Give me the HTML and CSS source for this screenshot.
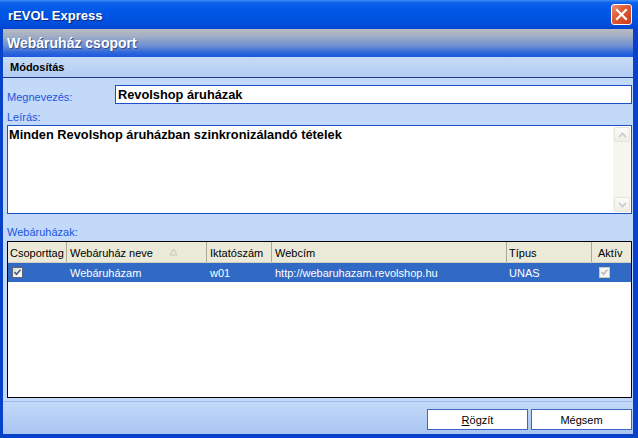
FILE: index.html
```html
<!DOCTYPE html>
<html lang="hu">
<head>
<meta charset="utf-8">
<title>rEVOL Express</title>
<link rel="stylesheet" href="styles.css">
</head>
<body>
<div class="window">
  <div class="titlebar">
    <span class="title">rEVOL Express</span>
    <span class="close">
      <svg width="13" height="13" viewBox="0 0 13 13"><path d="M2 2 L11 11 M11 2 L2 11" stroke="#fff" stroke-width="2.2" stroke-linecap="square"/></svg>
    </span>
  </div>
  <div class="frame">
    <div class="header">Webáruház csoport</div>
    <div class="subbar">Módosítás</div>
    <div class="content">
      <div class="field-row">
        <label class="label name-label">Megnevezés:</label>
        <div class="input">Revolshop áruházak</div>
      </div>
      <div class="label block-label">Leírás:</div>
      <div class="textarea">
        <div class="ta-text">Minden Revolshop áruházban szinkronizálandó tételek</div>
        <div class="vscroll">
          <span class="sbtn"><svg width="9" height="6" viewBox="0 0 9 6"><path d="M1 5 L4.5 1.5 L8 5" fill="none" stroke="#c3c9d8" stroke-width="1.6"/></svg></span>
          <span class="sbtn"><svg width="9" height="6" viewBox="0 0 9 6"><path d="M1 1 L4.5 4.5 L8 1" fill="none" stroke="#c3c9d8" stroke-width="1.6"/></svg></span>
        </div>
      </div>
      <div class="label block-label list-label">Webáruházak:</div>
      <div class="grid">
        <div class="grow ghead">
          <div class="c c1">Csoporttag</div>
          <div class="c c2">Webáruház neve<svg class="sort" width="9" height="8" viewBox="0 0 9 8"><path d="M4.5 1 L8 7 L1 7 Z" fill="none" stroke="#c8c5b6" stroke-width="1"/></svg></div>
          <div class="c c3">Iktatószám</div>
          <div class="c c4">Webcím</div>
          <div class="c c5">Típus</div>
          <div class="c c6">Aktív</div>
        </div>
        <div class="grow gsel">
          <div class="c c1"><span class="chk"><svg width="9" height="9" viewBox="0 0 9 9"><path d="M1.5 4 L3.5 6.3 L7.5 1.8" fill="none" stroke="#4a5a7a" stroke-width="1.5"/></svg></span></div>
          <div class="c c2">Webáruházam</div>
          <div class="c c3">w01</div>
          <div class="c c4">http://webaruhazam.revolshop.hu</div>
          <div class="c c5">UNAS</div>
          <div class="c c6"><span class="chk dis"><svg width="9" height="9" viewBox="0 0 9 9"><path d="M1.5 4 L3.5 6.3 L7.5 1.8" fill="none" stroke="#b8b8b8" stroke-width="1.5"/></svg></span></div>
        </div>
      </div>
    </div>
    <div class="footer">
      <button class="btn"><u>R</u>ögzít</button>
      <button class="btn">Mégsem</button>
    </div>
  </div>
</div>
</body>
</html>
```
FILE: styles.css
```css
html, body {
  margin: 0;
  padding: 0;
  background: #ffffff;
}
.window {
  width: 638px;
  height: 438px;
  display: flex;
  flex-direction: column;
  background: #0842c8;
  font-family: "Liberation Sans", Arial, sans-serif;
  font-size: 11px;
  color: #000;
  overflow: hidden;
}
.titlebar {
  height: 29px;
  flex: none;
  display: flex;
  align-items: center;
  justify-content: space-between;
  padding: 2px 6px 0 8px;
  box-sizing: border-box;
  background: linear-gradient(to bottom, #3d8df5 0px, #0a5ee9 3px, #0057e6 12px, #0050dd 22px, #0046d2 29px);
}
.title {
  font-weight: bold;
  font-size: 13px;
  color: #fff;
  text-shadow: 1px 1px 0 #0a2a80;
}
.close {
  width: 21px;
  height: 21px;
  box-sizing: border-box;
  border: 1px solid #ffffff;
  border-radius: 3px;
  background: linear-gradient(135deg, #f09070 0%, #e05a36 40%, #c83c1a 100%);
  display: flex;
  align-items: center;
  justify-content: center;
  margin-top: -2px;
}
.frame {
  flex: 1;
  margin: 0 5px 4px 3px;
  display: flex;
  flex-direction: column;
  background: #c3d9f9;
}
.header {
  height: 28px;
  flex: none;
  display: flex;
  align-items: center;
  padding-left: 4px;
  font-weight: bold;
  font-size: 14px;
  color: #fff;
  text-shadow: 1px 1px 0 #3a4e80;
  background: linear-gradient(to bottom, #b7bac3 0%, #a2aec4 25%, #6f8fd2 60%, #2d66dc 85%, #1a58dc 100%);
}
.subbar {
  height: 20px;
  flex: none;
  display: flex;
  align-items: center;
  padding-left: 7px;
  font-weight: bold;
  font-size: 11px;
  border-bottom: 1px solid #1c3a8a;
  background: linear-gradient(to bottom, #c6dbf8 0%, #b2ccf3 100%);
}
.content {
  flex: 1;
  padding: 7px 1px 0 4px;
  display: flex;
  flex-direction: column;
}
.field-row {
  display: flex;
  height: 19px;
}
.label {
  color: #1b55dc;
  font-size: 11px;
}
.name-label {
  width: 108px;
  padding-top: 5px;
  line-height: 14px;
}
.input {
  flex: 1;
  box-sizing: border-box;
  height: 19px;
  border: 1px solid #1c50c8;
  background: #fff;
  font-weight: bold;
  font-size: 12.8px;
  line-height: 17px;
  padding-left: 2px;
}
.block-label {
  margin-top: 6px;
  height: 15px;
  line-height: 15px;
}
.list-label {
  margin-top: 11px;
}
.textarea {
  height: 89px;
  box-sizing: border-box;
  border: 1px solid #1c50c8;
  background: #fff;
  display: flex;
}
.ta-text {
  flex: 1;
  font-weight: bold;
  font-size: 12.8px;
  line-height: 15px;
  padding: 1px 1px;
}
.vscroll {
  width: 17px;
  margin: 1px 1px 1px 0;
  background: #f6f5ee;
  display: flex;
  flex-direction: column;
  justify-content: space-between;
}
.sbtn {
  width: 16px;
  height: 15px;
  box-sizing: border-box;
  border: 1px solid #e8e6dc;
  border-radius: 2px;
  background: linear-gradient(to bottom, #fbfbf8, #efeee6);
  display: flex;
  align-items: center;
  justify-content: center;
  margin-left: 1px;
}
.grid {
  margin-top: 1px;
  height: 157px;
  box-sizing: border-box;
  border: 1px solid #000;
  background: #fff;
}
.grow {
  display: flex;
}
.c {
  box-sizing: border-box;
  white-space: nowrap;
  overflow: hidden;
  display: flex;
  align-items: center;
}
.c1 { width: 59px; padding-left: 2px; }
.c2 { width: 140px; padding-left: 3px; }
.c3 { width: 65px; padding-left: 3px; }
.c4 { width: 235px; padding-left: 3px; }
.c5 { width: 85px; padding-left: 2px; }
.c6 { width: 39px; padding-left: 7px; }
.ghead {
  height: 21px;
  background: #ebe9d8;
  border-bottom: 1px solid #d2cfbd;
  box-sizing: border-box;
}
.ghead .c {
  border-right: 1px solid #aca899;
  height: 20px;
  padding-top: 1px;
}
.ghead .c6 {
  border-right: none;
  padding-left: 6px;
}
.sort {
  margin-left: 16px;
  margin-bottom: 2px;
  flex: none;
}
.gsel {
  height: 19px;
  background: #316ac5;
  color: #fff;
}
.gsel .c1 { padding-left: 4px; }
.gsel .c5 { padding-left: 2px; }
.chk {
  width: 11px;
  height: 11px;
  box-sizing: border-box;
  border: 1px solid #596677;
  background: linear-gradient(135deg, #dcdcd7, #ffffff);
  display: flex;
  align-items: center;
  justify-content: center;
}
.chk.dis {
  border-color: #c9c9c2;
  background: #f4f4f0;
}
.footer {
  height: 33px;
  flex: none;
  box-sizing: border-box;
  border-top: 1px solid #9cbaef;
  background: linear-gradient(to bottom, #c3d9f9 0%, #a9c5f1 100%);
  display: flex;
  justify-content: flex-end;
  align-items: flex-start;
  gap: 3px;
  padding: 7px 1px 0 0;
}
.btn {
  width: 101px;
  height: 21px;
  box-sizing: border-box;
  border: 1px solid #3a68c4;
  background: #fff;
  font-family: "Liberation Sans", Arial, sans-serif;
  font-size: 11px;
  color: #000;
  padding: 0;
  margin: 0;
}
```
